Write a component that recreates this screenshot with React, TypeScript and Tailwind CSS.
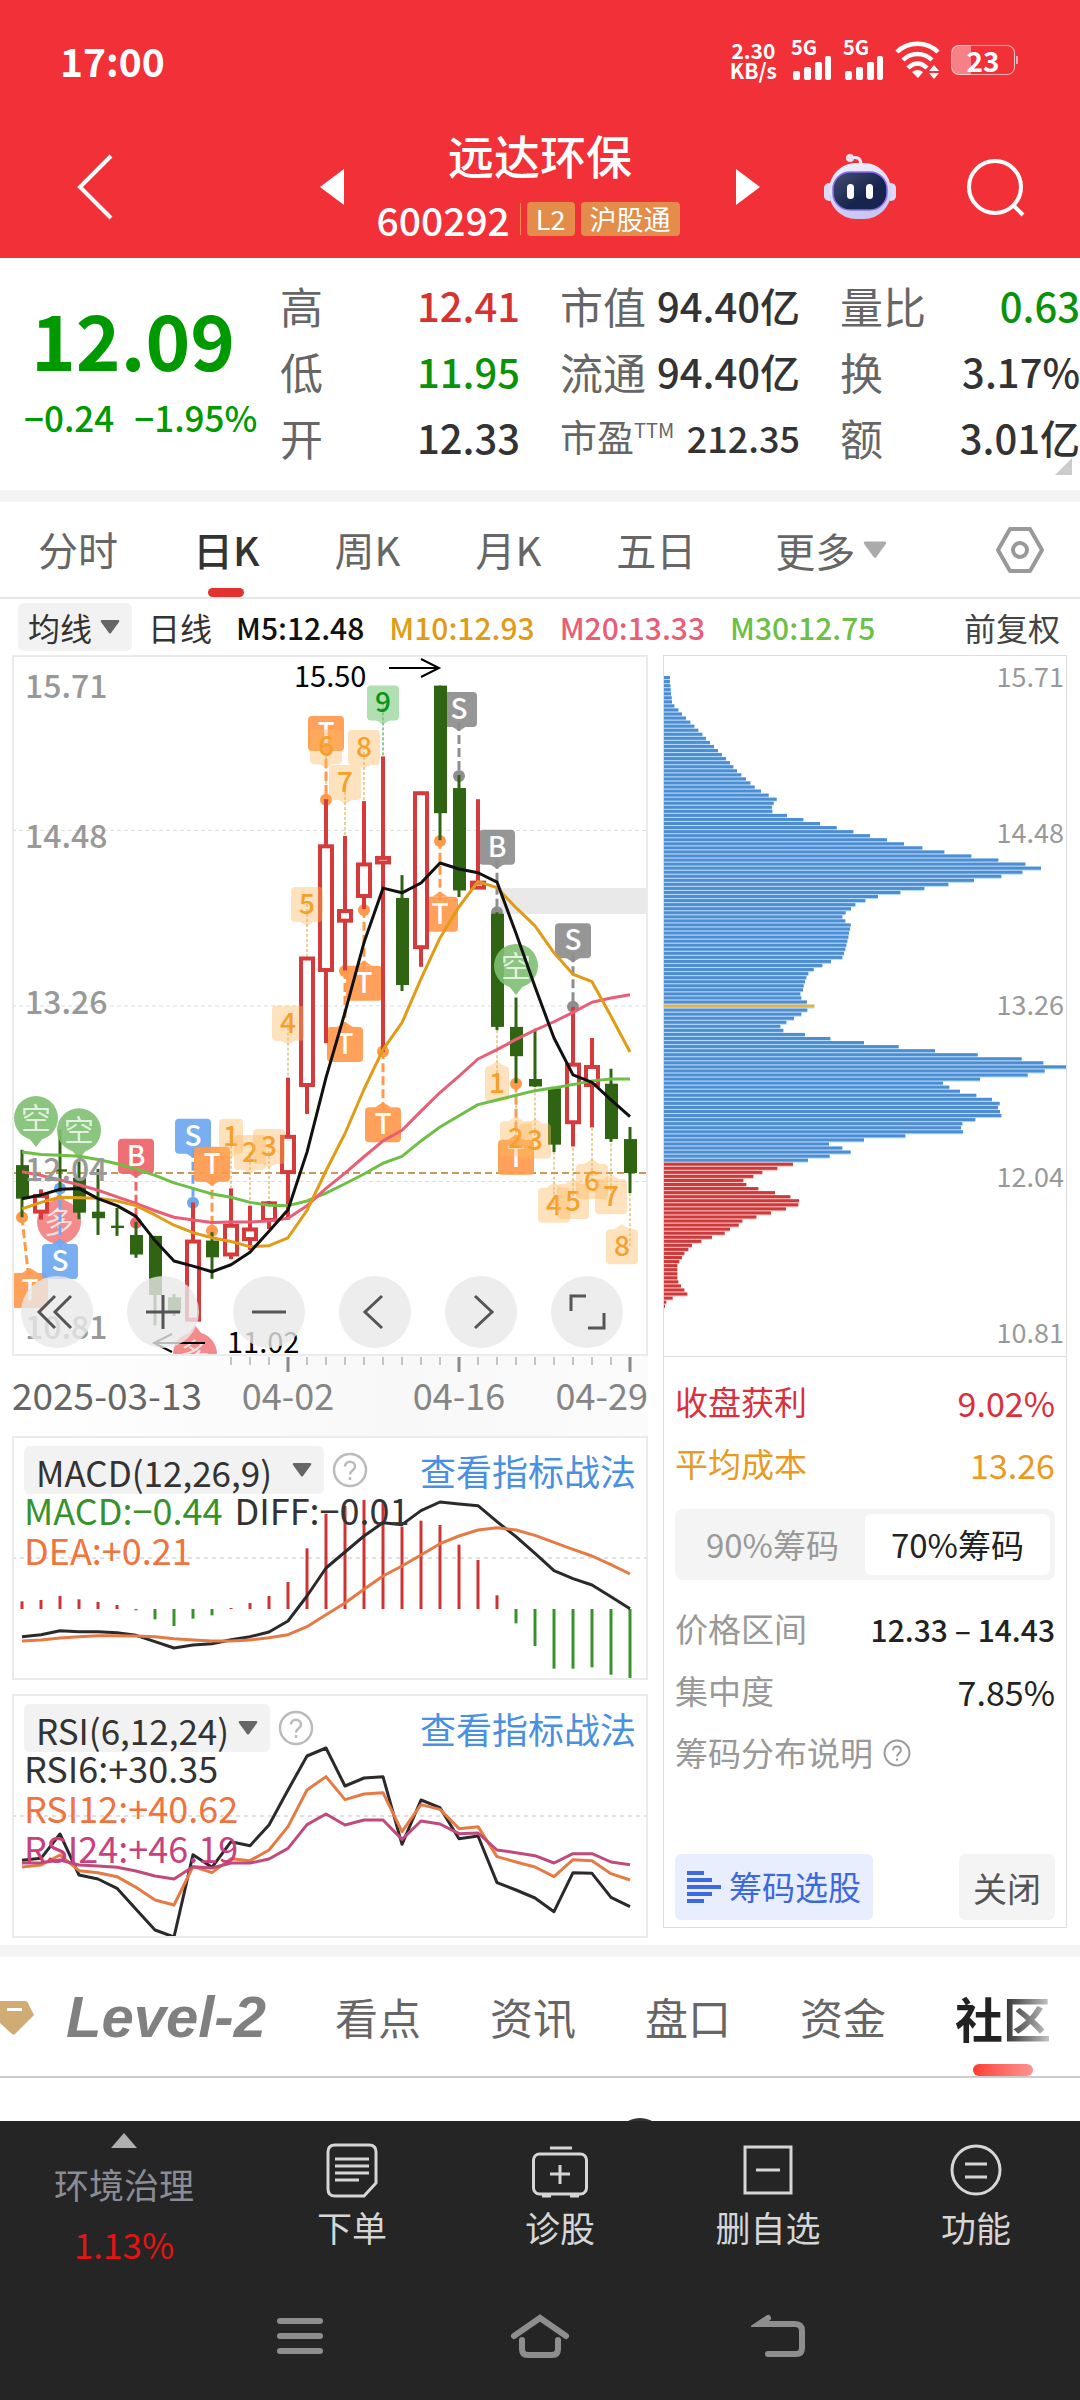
import type { ReactNode } from "react";
import clsx from "clsx";

/* ---------- chart data ---------- */

type Candle = { up?: boolean; high: number; top: number; bottom: number; low: number };

// Levels are in plot units, larger means a lower price.
const candle = (up: number, high: number, top: number, bottom: number, low: number): Candle => ({
  up: up === 1,
  high,
  top,
  bottom,
  low,
});

const CANDLES: Candle[] = [
  candle(0, 1095, 1128, 1200, 1240),
  candle(1, 1180, 1192, 1230, 1245),
  candle(0, 1052, 1137, 1142, 1185),
  candle(0, 1120, 1155, 1230, 1244),
  candle(0, 1136, 1228, 1242, 1278),
  candle(0, 1220, 1258, 1263, 1280),
  candle(0, 1250, 1278, 1320, 1327),
  candle(0, 1280, 1280, 1407, 1472),
  candle(0, 1405, 1412, 1445, 1452),
  candle(1, 1208, 1290, 1462, 1465),
  candle(0, 1272, 1290, 1326, 1372),
  candle(1, 1178, 1256, 1322, 1330),
  candle(1, 1215, 1264, 1289, 1310),
  candle(1, 1205, 1208, 1248, 1265),
  candle(1, 940, 1065, 1145, 1245),
  candle(1, 682, 682, 958, 1018),
  candle(1, 342, 441, 711, 866),
  candle(1, 421, 580, 605, 710),
  candle(1, 346, 480, 552, 578),
  candle(1, 250, 466, 480, 885),
  candle(0, 505, 554, 741, 754),
  candle(1, 326, 327, 662, 702),
  candle(0, 98, 98, 372, 430),
  candle(0, 290, 318, 538, 552),
  candle(1, 342, 519, 534, 534),
  candle(0, 585, 588, 831, 838),
  candle(0, 768, 831, 894, 952),
  candle(0, 835, 943, 959, 960),
  candle(0, 963, 963, 1084, 1100),
  candle(1, 788, 910, 1038, 1088),
  candle(1, 855, 915, 958, 1047),
  candle(0, 921, 953, 1072, 1078),
  candle(0, 1046, 1072, 1145, 1188),
];

const M5 = [
  1200, 1192, 1180, 1178, 1200, 1215, 1238, 1290, 1334, 1345, 1357, 1342, 1315, 1270, 1224, 1100, 940, 800, 650, 533,
  543, 522, 479, 492, 500, 520, 630, 745, 855, 934, 950, 988, 1024,
];
const M10 = [
  1222, 1208, 1197, 1198, 1199, 1205, 1215, 1235, 1257, 1273, 1284, 1292, 1303, 1301, 1284, 1225, 1140, 1060, 965, 880,
  822, 728, 640, 573, 519, 532, 575, 614, 672, 718, 734, 808, 885,
];
const M20 = [
  1142, 1150, 1160, 1170, 1182, 1196, 1210, 1226, 1240, 1246, 1251, 1250, 1250, 1248, 1242, 1215, 1178, 1145, 1110,
  1076, 1053, 1012, 972, 937, 900, 880, 858, 838, 820, 800, 778, 769, 762,
];
const M30 = [
  1100, 1105, 1107, 1109, 1116, 1125, 1136, 1150, 1166, 1178, 1190, 1197, 1208, 1214, 1215, 1205, 1188, 1168, 1147,
  1124, 1109, 1076, 1046, 1022, 998, 988, 978, 968, 962, 955, 947, 943, 943,
];

const MACD_BARS = [
  784, 780, 768, 778, 786, 795, 811, 838, 858, 836, 826, 804, 789, 768, 726, 625, 521, 498, 480, 487, 560, 542, 555,
  614, 660, 766, 850, 918, 986, 986, 982, 1004, 1020,
];
const DIFF = [
  890, 884, 872, 875, 875, 878, 886, 905, 924, 915, 911, 899, 890, 876, 843, 768, 684, 636, 588, 548, 554, 512, 486,
  492, 497, 545, 590, 640, 692, 716, 735, 770, 806,
];
const DEA = [
  903, 900, 894, 890, 887, 887, 888, 890, 896, 900, 903, 903, 900, 893, 884, 860, 824, 789, 748, 708, 678, 645, 611,
  588, 570, 563, 570, 586, 607, 628, 648, 674, 702,
];

const RSI6 = [
  541, 535, 462, 585, 597, 625, 688, 750, 771, 524, 562, 485, 497, 435, 330, 228, 204, 318, 294, 290, 493, 360, 383,
  476, 468, 608, 630, 654, 695, 578, 580, 652, 680,
];
const RSI12 = [
  561, 555, 525, 572, 578, 590, 622, 660, 675, 560, 578, 536, 542, 510, 440, 330, 290, 359, 342, 338, 455, 374, 388,
  446, 440, 530, 546, 561, 590, 539, 542, 581, 600,
];
const RSI24 = [
  549, 548, 540, 555, 558, 562, 573, 588, 597, 560, 564, 549, 549, 537, 505, 434, 402, 435, 420, 420, 478, 423, 432,
  461, 459, 510, 518, 527, 549, 521, 521, 546, 554,
];

const CHIPS = [
  89, 89, 90, 91, 92, 94, 95, 102, 114, 125, 137, 150, 162, 174, 186, 197, 209, 221, 233, 245, 257, 269, 279, 290, 303,
  317, 330, 343, 362, 385, 409, 400, 395, 396, 440, 489, 539, 589, 639, 689, 740, 791, 846, 912, 993, 1074, 1155, 1202,
  1146, 1083, 1001, 924, 852, 780, 713, 675, 645, 632, 616, 606, 615, 631, 629, 626, 624, 621, 618, 615, 611, 606, 572,
  546, 520, 504, 498, 494, 490, 488, 480, 483, 500, 522, 501, 483, 461, 438, 420, 429, 494, 570, 671, 775, 884, 1012,
  1144, 1209, 1281, 1213, 1162, 1019, 908, 927, 959, 1008, 1055, 1078, 1073, 1079, 1083, 1005, 966, 962, 968, 795, 671,
  566, 606, 631, 568, 503, 458, 411, 366, 339, 309, 318, 354, 404, 450, 476, 474, 437, 392, 348, 306, 295, 269, 253,
  215, 183, 155, 144, 132, 125, 117, 111, 111, 111, 111, 114, 122, 132, 141, 97, 78, 74,
];
const AVERAGE_COST_ROW = 81;
const FIRST_PROFIT_ROW = 120;

const xAt = (i: number) => 10 + 19 * i;
const yMain = (v: number) => v / 2.148 - 15;
const yMacd = (v: number) => v / 3 - 96;
const yRsi = (v: number) => v / 3 - 14;
const toPoints = (values: number[], y: (v: number) => number) => values.map((v, i) => `${xAt(i)},${y(v)}`).join(" ");

/* ---------- chart marks ---------- */

type TagProps = {
  x: number;
  y: number;
  label: string;
  fill: string;
  color: string;
  width?: number;
  opacity?: number;
  pointUp?: boolean;
};

const Tag = ({ x, y, label, fill, color, width = 36, opacity = 1, pointUp }: TagProps) => {
  const cy = yMain(y);
  const edge = pointUp ? cy - 17 : cy + 17;
  const tip = pointUp ? edge - 5 : edge + 5;
  return (
    <g>
      <g fill={fill} opacity={opacity}>
        <rect x={x - width / 2} y={cy - 17} width={width} height={35} rx={4} />
        <polygon points={`${x - 8},${edge} ${x},${tip} ${x + 8},${edge}`} />
      </g>
      <text x={x} y={cy + 10} textAnchor="middle" fontSize={28} fontWeight={500} fill={color}>
        {label}
      </text>
    </g>
  );
};

const Balloon = ({ x, y, label, fill, pointUp }: { x: number; y: number; label: string; fill: string; pointUp?: boolean }) => {
  const cy = yMain(y);
  const dir = pointUp ? -1 : 1;
  return (
    <g>
      <g fill={fill} opacity={0.9}>
        <circle cx={x} cy={cy} r={22} />
        <polygon points={`${x - 8},${cy + dir * 19} ${x},${cy + dir * 29} ${x + 8},${cy + dir * 19}`} />
      </g>
      <text x={x} y={cy + 11} textAnchor="middle" fontSize={30} fill="#fff" opacity={0.75}>
        {label}
      </text>
    </g>
  );
};

const ORANGE = "#ff9a4d";
const BLUE = "#6ea8f0";
const RED = "#ee6469";
const GREY = "#8e8e8e";

// [x, y, dot x, dot y, letter, colour]
const SIGNALS: [number, number, number, number, string, string][] = [
  [18, 1396, 10, 1240, "T", ORANGE],
  [48, 1334, 48, 1178, "S", BLUE],
  [124, 1108, 124, 1252, "B", RED],
  [181, 1065, 181, 1209, "S", BLUE],
  [200, 1125, 200, 1269, "T", ORANGE],
  [314, 200, 314, 343, "T", ORANGE],
  [333, 868, 333, 711, "T", ORANGE],
  [352, 736, 352, 580, "T", ORANGE],
  [371, 1040, 371, 884, "T", ORANGE],
  [428, 588, 428, 432, "T", ORANGE],
  [447, 148, 447, 292, "S", GREY],
  [485, 444, 485, 585, "B", GREY],
  [561, 645, 561, 788, "S", GREY],
  [504, 1110, 504, 953, "T", ORANGE],
];

// [x, y, candle edge, digit]
const COUNTS: [number, number, number, string][] = [
  [219, 1065, 1178, "1"],
  [238, 1100, 1215, "2"],
  [257, 1087, 1205, "3"],
  [276, 822, 940, "4"],
  [295, 567, 682, "5"],
  [314, 228, 342, "6"],
  [333, 305, 421, "7"],
  [352, 230, 346, "8"],
  [371, 134, 250, "9"],
  [485, 952, 838, "1"],
  [504, 1070, 952, "2"],
  [523, 1075, 960, "3"],
  [542, 1213, 1100, "4"],
  [561, 1205, 1088, "5"],
  [580, 1162, 1047, "6"],
  [599, 1195, 1078, "7"],
  [610, 1302, 1188, "8"],
];

const PriceChart = () => (
  <svg viewBox="0 0 636 701" className="block h-auto w-full" role="img" aria-label="日K线">
    {[409, 786, 1163].map((y) => (
      <line key={y} x1={0} x2={636} y1={yMain(y)} y2={yMain(y)} stroke="#dcdcdc" strokeWidth={1} strokeDasharray="4 3" />
    ))}
    <rect x={488} y={233} width={148} height={26} fill="#e9e9e9" />
    <line x1={0} x2={636} y1={518} y2={518} stroke="#c69a5c" strokeWidth={2} strokeDasharray="7 4" />

    {COUNTS.map(([x, y, edge, digit]) => {
      const lineX = digit === "8" && y > 1000 ? xAt(32) : x;
      return (
        <line
          key={`${x}-${y}`}
          x1={lineX}
          x2={lineX}
          y1={yMain(y)}
          y2={yMain(edge)}
          stroke={digit === "9" ? "#14991e" : "#d3a13a"}
          strokeWidth={1}
          strokeDasharray="3 2"
        />
      );
    })}

    <Balloon x={47} y={1250} label="多" fill="#f27e80" pointUp />
    {SIGNALS.map(([x, y, dotX, dotY, letter, fill]) => (
      <g key={`${letter}-${x}-${y}`}>
        <line x1={x} y1={yMain(y)} x2={dotX} y2={yMain(dotY)} stroke={fill} strokeWidth={3} strokeDasharray="9 4" />
        <circle cx={dotX} cy={yMain(dotY)} r={6} fill={fill} />
        <Tag x={x} y={y} label={letter} fill={fill} color="#fff" opacity={0.92} pointUp={y > dotY} />
      </g>
    ))}

    {CANDLES.map(({ up, high, top, bottom, low }, i) => {
      const x = xAt(i);
      const color = up ? "#d63a3a" : "#2f6412";
      const bodyHeight = Math.max(yMain(bottom) - yMain(top), 2);
      return (
        <g key={i} stroke={color} strokeWidth={up ? 4 : 3}>
          <line x1={x} x2={x} y1={yMain(high)} y2={yMain(up ? top : low)} />
          {up && <line x1={x} x2={x} y1={yMain(bottom)} y2={yMain(low)} />}
          {up ? (
            <rect x={x - 6} y={yMain(top) + 1} width={12} height={Math.max(bodyHeight - 2, 2)} fill="#fff" />
          ) : (
            <rect x={x - 6} y={yMain(top)} width={13} height={bodyHeight} fill={color} stroke="none" />
          )}
        </g>
      );
    })}

    {COUNTS.map(([x, y, edge, digit]) => (
      <Tag
        key={`${x}-${y}`}
        x={x}
        y={y}
        label={digit}
        width={digit === "1" ? 24 : 32}
        fill={digit === "9" ? "#7cca7f" : "#fdb95d"}
        color={digit === "9" ? "#0b9417" : "#f6a02c"}
        opacity={digit === "9" ? 0.6 : 0.4}
        pointUp={y > edge}
      />
    ))}

    <Balloon x={24} y={1027} label="空" fill="#7fbf72" />
    <Balloon x={67} y={1053} label="空" fill="#7fbf72" />
    <Balloon x={504} y={700} label="空" fill="#7fbf72" />
    <Balloon x={183} y={1534} label="多" fill="#f27e80" pointUp />

    <g fill="none" strokeWidth={3} strokeLinejoin="round">
      <polyline points={toPoints(M30, yMain)} stroke="#6dbf45" />
      <polyline points={toPoints(M20, yMain)} stroke="#ea5d76" />
      <polyline points={toPoints(M10, yMain)} stroke="#e09c16" />
      <polyline points={toPoints(M5, yMain)} stroke="#111" />
    </g>

    <g fontSize={32} fontWeight={500} fill="#999">
      <text x={13} y={43}>15.71</text>
      <text x={13} y={193}>14.48</text>
      <text x={13} y={359}>13.26</text>
      <text x={13} y={526}>12.04</text>
      <text x={13} y={684}>10.81</text>
    </g>
    <g fontSize={29} fill="#000">
      <text x={282} y={32}>15.50</text>
      <text x={215} y={698}>11.02</text>
    </g>
    <g fill="none" stroke="#000" strokeWidth={2}>
      <path d="M377 13H427M409 4L427 13L409 22" />
      <path d="M193 688H142M160 679L142 688L160 697" />
    </g>
  </svg>
);

const DateAxis = () => (
  <svg viewBox="0 0 636 80" className="block h-auto w-full">
    <defs>
      <linearGradient id="axis-shade">
        <stop offset="0" stopColor="#fff" />
        <stop offset="0.6" stopColor="#f8f8f8" />
        <stop offset="1" stopColor="#fbfbfb" />
      </linearGradient>
    </defs>
    <rect width={636} height={80} fill="url(#axis-shade)" />
    {CANDLES.map((_, i) =>
      i < 11 ? null : (
        <line
          key={i}
          x1={xAt(i)}
          x2={xAt(i)}
          y1={1}
          y2={(i - 14) % 9 === 0 ? 16 : 9}
          stroke={(i - 14) % 9 === 0 ? "#8a8a8a" : "#c4c4c4"}
          strokeWidth={(i - 14) % 9 === 0 ? 3 : 2}
        />
      ),
    )}
    <g fontSize={36} fill="#858585">
      <text x={0} y={54} fontSize={37} fill="#666">2025-03-13</text>
      <text x={276} y={54} textAnchor="middle">04-02</text>
      <text x={447} y={54} textAnchor="middle">04-16</text>
      <text x={636} y={54} textAnchor="end">04-29</text>
    </g>
  </svg>
);

const MacdPlot = () => (
  <svg viewBox="0 0 636 244" className="block h-auto w-full [grid-area:1/1]">
    <line x1={0} x2={636} y1={122} y2={122} stroke="#e0e0e0" strokeWidth={2} strokeDasharray="4 4" />
    {MACD_BARS.map((v, i) => (
      <line
        key={i}
        x1={xAt(i)}
        x2={xAt(i)}
        y1={173}
        y2={yMacd(v)}
        stroke={v < 808 ? "#cf3434" : "#38922b"}
        strokeWidth={3}
      />
    ))}
    <g fill="none" strokeWidth={3} strokeLinejoin="round">
      <polyline points={toPoints(DIFF, yMacd)} stroke="#2a2a2a" />
      <polyline points={toPoints(DEA, yMacd)} stroke="#e67a45" />
    </g>
  </svg>
);

const RsiPlot = () => (
  <svg viewBox="0 0 636 244" className="block h-auto w-full [grid-area:1/1]">
    <line x1={0} x2={636} y1={122} y2={122} stroke="#e0e0e0" strokeWidth={2} strokeDasharray="4 4" />
    <g fill="none" strokeWidth={3} strokeLinejoin="round">
      <polyline points={toPoints(RSI6, yRsi)} stroke="#2a2a2a" />
      <polyline points={toPoints(RSI12, yRsi)} stroke="#e67a45" />
      <polyline points={toPoints(RSI24, yRsi)} stroke="#c04a7c" />
    </g>
  </svg>
);

const ChipChart = () => (
  <svg viewBox="1 0 402 700" className="block h-auto w-full" role="img" aria-label="筹码分布">
    {CHIPS.map((v, i) => {
      const fill = i === AVERAGE_COST_ROW ? "#e3b34a" : i >= FIRST_PROFIT_ROW ? "#cd3a3c" : "#4f8dd3";
      const gap = i >= FIRST_PROFIT_ROW ? "#ffc4c4" : "#b4defb";
      const width = (v - 71) / 3;
      const y = 20 + i * 4.056;
      return (
        <g key={i}>
          <rect x={1} y={y} width={width} height={4.056} fill={gap} />
          <rect x={1} y={y} width={width} height={3} fill={fill} />
        </g>
      );
    })}
    <g fontSize={27} fill="#999" textAnchor="end">
      <text x={401} y={31}>15.71</text>
      <text x={401} y={187}>14.48</text>
      <text x={401} y={359}>13.26</text>
      <text x={401} y={531}>12.04</text>
      <text x={401} y={687}>10.81</text>
    </g>
  </svg>
);

/* ---------- small parts ---------- */

const Caret = ({ className }: { className?: string }) => (
  <svg viewBox="0 0 20 14" className={clsx("pointer-events-none h-[14px] w-5", className)} fill="currentColor">
    <path d="M2 0H18Q20 0 19 2L11 13Q10 14 9 13L1 2Q0 0 2 0Z" />
  </svg>
);

const Help = ({ className }: { className?: string }) => (
  <svg viewBox="0 0 36 36" className={className} fill="none" stroke="currentColor" strokeWidth={2.5}>
    <circle cx={18} cy={18} r={16} />
    <path d="M13 14.5C13 8 23 8 23 14.5C23 18.5 18 18.5 18 22.5M18 25V28" />
  </svg>
);

const Dropdown = ({ label, value, className }: { label: string; value: string; className?: string }) => (
  <div className={clsx("relative flex h-12 items-center rounded-md bg-[#f2f2f2]", className)}>
    <select aria-label={label} className="h-12 w-full appearance-none bg-transparent text-[#333] outline-none">
      <option>{value}</option>
    </select>
    <Caret className="absolute right-3 text-[#666]" />
  </div>
);

type IndicatorPanelProps = { name: string; selectClass: string; plot: ReactNode; children: ReactNode };

const IndicatorPanel = ({ name, selectClass, plot, children }: IndicatorPanelProps) => (
  <section className="grid outline-2 -outline-offset-2 outline-[#ebebeb]">
    {plot}
    <div className="px-3 pt-[10px] [grid-area:1/1]">
      <div className="flex items-center text-[35px]">
        <Dropdown label="指标" value={name} className={selectClass} />
        <button aria-label="指标说明" className="ml-2 text-[#bbb]">
          <Help className="size-9" />
        </button>
        <a href="#tactics" className="ml-auto text-4xl text-[#4a90e2]">
          查看指标战法
        </a>
      </div>
      <div className="-mt-[5px] text-4xl leading-10">{children}</div>
    </div>
  </section>
);

const Signal = () => (
  <div className="flex flex-col">
    <span className="text-xl leading-4 font-bold">5G</span>
    <svg viewBox="0 0 40 26" className="h-[26px] w-10" fill="#fff">
      <rect x={2} y={16} width={7} height={9} rx={2} />
      <rect x={13} y={12} width={7} height={13} rx={2} />
      <rect x={24} y={7} width={7} height={18} rx={2} />
      <rect x={34} y={1} width={6} height={24} rx={2} />
    </svg>
  </div>
);

const StatusBar = () => (
  <div className="flex h-[120px] items-center pr-[62px] pl-[60px]">
    <time className="text-[39px] leading-none font-bold">17:00</time>
    <div className="ml-auto flex flex-col items-center text-[21px] leading-5 font-bold">
      <span>2.30</span>
      <span>KB/s</span>
    </div>
    <div className="ml-[14px] flex gap-3">
      <Signal />
      <Signal />
    </div>
    <svg viewBox="0 0 46 38" className="ml-3 h-[38px] w-[46px]" fill="none" stroke="#fff" strokeWidth={4.5}>
      <path d="M2 11C13 0 32 0 43 11" />
      <path d="M8 19C16 11 29 11 37 19" />
      <path d="M13 27C19 21 26 21 32 27" />
      <path d="M17 31Q22.500 27 28 31L23 37Z" fill="#fff" stroke="none" />
      <path d="M34 30L39 24L44 30ZM34 32L39 38L44 32Z" fill="#fff" stroke="none" />
    </svg>
    <div className="ml-[10px] flex h-[30px] w-16 items-center justify-center rounded-lg border border-white/60 bg-linear-to-r from-white/40 from-30% to-transparent to-30% text-[28px] leading-none font-bold">
      23
    </div>
    <div className="ml-px h-2 w-[2px] bg-white/60" />
  </div>
);

const Robot = () => (
  <svg viewBox="0 0 72 68" className="h-[68px] w-[72px]">
    <defs>
      <linearGradient id="shell" x1="0" y1="0" x2="0.300" y2="1">
        <stop offset="0" stopColor="#f4f2fb" />
        <stop offset="1" stopColor="#c9c8f2" />
      </linearGradient>
      <linearGradient id="visor" x1="0" y1="0" x2="1" y2="1">
        <stop offset="0" stopColor="#44506f" />
        <stop offset="0.600" stopColor="#17244d" />
      </linearGradient>
    </defs>
    <path d="M27 5C34 3 37 6 37 12" fill="none" stroke="#eceaf8" strokeWidth={3} />
    <circle cx={26} cy={5} r={4} fill="#e4e2f4" />
    <rect x={0} y={30} width={10} height={18} rx={5} fill="#dcdaf4" />
    <rect x={62} y={30} width={10} height={18} rx={5} fill="#dcdaf4" />
    <rect x={5} y={10} width={62} height={56} rx={27} fill="url(#shell)" />
    <rect x={9} y={19} width={54} height={38} rx={17} fill="url(#visor)" stroke="#8a6cf0" strokeWidth={1.5} />
    <rect x={23} y={31} width={7} height={15} rx={3.5} fill="#fff" />
    <rect x={42} y={31} width={7} height={15} rx={3.5} fill="#fff" />
  </svg>
);

const TitleBar = () => (
  <div className="grid h-[138px] grid-cols-[1fr_440px_1fr] items-center pb-1">
    <button aria-label="返回" className="justify-self-start pl-[76px]">
      <svg viewBox="0 0 38 66" className="h-[66px] w-[38px]" fill="none" stroke="#fff" strokeWidth={4}>
        <path d="M35 2L4 33L35 64" />
      </svg>
    </button>
    <div className="flex items-center justify-between">
      <button aria-label="上一只">
        <svg viewBox="0 0 24 36" className="h-9 w-6" fill="#fff">
          <path d="M24 0V36L0 18Z" />
        </svg>
      </button>
      <div className="flex flex-col items-center">
        <h1 className="text-[46px] leading-[64px] font-medium">远达环保</h1>
        <div className="flex h-[66px] items-center gap-[6px] pr-6">
          <span className="pr-1 text-[39px] leading-none font-medium">600292</span>
          <span className="h-8 w-px bg-[#f08a50]" />
          <span className="rounded-sm bg-[#e48c49] px-[9px] text-[27px] leading-[34px]">L2</span>
          <span className="rounded-sm bg-[#e48c49] px-[9px] text-[27px] leading-[34px]">沪股通</span>
        </div>
      </div>
      <button aria-label="下一只">
        <svg viewBox="0 0 24 36" className="h-9 w-6" fill="#fff">
          <path d="M0 0V36L24 18Z" />
        </svg>
      </button>
    </div>
    <div className="flex items-center justify-between pr-[54px] pl-16">
      <button aria-label="智能助手">
        <Robot />
      </button>
      <button aria-label="搜索">
        <svg viewBox="0 0 60 60" className="size-[60px]" fill="none" stroke="#fff" strokeWidth={4}>
          <circle cx={29} cy={30} r={26} />
          <path d="M47 48L57 58" />
        </svg>
      </button>
    </div>
  </div>
);

const QUOTES: { key: string; label: ReactNode; value: string; tone: string; small?: boolean }[] = [
  { key: "high", label: "高", value: "12.41", tone: "text-[#d63232]" },
  { key: "cap", label: "市值", value: "94.40亿", tone: "text-[#333]" },
  { key: "volume", label: "量比", value: "0.63", tone: "text-[#0a930a]" },
  { key: "low", label: "低", value: "11.95", tone: "text-[#0a930a]" },
  { key: "float", label: "流通", value: "94.40亿", tone: "text-[#333]" },
  { key: "turnover", label: "换", value: "3.17%", tone: "text-[#333]" },
  { key: "open", label: "开", value: "12.33", tone: "text-[#333]" },
  {
    key: "pe",
    label: (
      <>
        市盈<sup className="top-[-14px] text-xl">TTM</sup>
      </>
    ),
    value: "212.35",
    tone: "text-[#333]",
    small: true,
  },
  { key: "amount", label: "额", value: "3.01亿", tone: "text-[#333]" },
];

const QuoteBoard = () => (
  <section className="flex h-[232px] pt-[14px]">
    <div className="w-[280px] pt-3 whitespace-nowrap text-[#009900]">
      <div className="pl-[31px] text-[76px] leading-[108px] font-bold">12.09</div>
      <div className="flex gap-5 pl-6 text-[35px] leading-[50px] font-medium">
        <span>−0.24</span>
        <span>−1.95%</span>
      </div>
    </div>
    <div className="relative flex-1">
      <dl className="grid grid-cols-3 gap-x-10">
        {QUOTES.map(({ key, label, value, tone, small }) => (
          <div key={key} className="flex h-[66px] items-center justify-between whitespace-nowrap">
            <dt className={clsx("text-[#666]", small ? "text-[37px]" : "text-[43px]")}>{label}</dt>
            <dd className={clsx("font-medium", tone, small ? "text-[36px]" : "text-[40px]")}>{value}</dd>
          </div>
        ))}
      </dl>
      <svg viewBox="0 0 17 17" className="absolute right-2 bottom-[15px] size-[17px]" fill="#ccc">
        <path d="M17 0V17H0Z" />
      </svg>
    </div>
  </section>
);

const PERIODS = ["分时", "日K", "周K", "月K", "五日"];

const PeriodTabs = () => (
  <nav className="flex h-[97px] items-stretch gap-[75px] border-b-2 border-[#e6e6e6] pr-9 pl-[38px] text-[40px] text-[#666]">
    {PERIODS.map((period) => {
      const active = period === "日K";
      return (
        <button key={period} className={clsx("flex flex-col items-center", active && "font-medium text-[#333]")}>
          <span className="min-h-0 flex-1 leading-[94px]">{period}</span>
          {active && <span className="h-[9px] w-9 shrink-0 rounded-full bg-[#e33030]" />}
        </button>
      );
    })}
    <button aria-haspopup="menu" className="flex items-center gap-2 pl-1">
      更多
      <Caret className="h-[18px] w-6 text-[#aaa]" />
    </button>
    <button aria-label="设置" className="ml-auto">
      <svg viewBox="0 0 48 48" className="size-12" fill="none" stroke="#999" strokeWidth={4} strokeLinejoin="round">
        <path d="M14 3H34L46 24L34 45H14L2 24Z" />
        <circle cx={24} cy={24} r={7} />
      </svg>
    </button>
  </nav>
);

const CHART_TOOLS: { label: string; path: string }[] = [
  { label: "最早", path: "M34 20L18 36L34 52M50 20L34 36L50 52" },
  { label: "放大", path: "M19 36H53M36 19V53" },
  { label: "缩小", path: "M19 36H53" },
  { label: "向左", path: "M43 20L26 36L43 52" },
  { label: "向右", path: "M30 20L47 36L30 52" },
  { label: "全屏", path: "M35 20H20V35M53 37V52H37" },
];

const InfoRow = ({ label, value, tone, strong }: { label: string; value: string; tone: string; strong?: boolean }) => (
  <div className={clsx("flex h-[62px] items-center justify-between whitespace-nowrap", tone)}>
    <dt>{label}</dt>
    <dd className={clsx(tone === "text-[#999]" && "text-[#222]", strong ? "text-[30px] font-medium" : "text-[34px]")}>{value}</dd>
  </div>
);

const ChipPanel = () => (
  <aside className="w-[404px] self-start border border-[#ddd] text-[33px]">
    <ChipChart />
    <div className="border-t border-[#ddd] px-[11px] pt-[14px] pb-[7px]">
      <dl>
        <InfoRow label="收盘获利" value="9.02%" tone="text-[#dc2f3e]" />
        <InfoRow label="平均成本" value="13.26" tone="text-[#e99a23]" />
      </dl>
      <div className="mt-[14px] flex h-[71px] rounded-lg bg-[#f4f4f4] p-[5px] text-[33px] text-[#999]">
        <button className="flex-1">90%筹码</button>
        <button className="flex-1 rounded-md bg-white text-[#222]">70%筹码</button>
      </div>
      <dl className="mt-[18px]">
        <InfoRow label="价格区间" value="12.33 – 14.43" tone="text-[#999]" strong />
        <InfoRow label="集中度" value="7.85%" tone="text-[#999]" />
      </dl>
      <button className="flex h-[62px] items-center gap-[10px] text-[#999]">
        筹码分布说明
        <Help className="size-7" />
      </button>
      <div className="mt-[70px] flex h-[66px] items-stretch justify-between">
        <button className="flex w-[198px] items-center justify-center gap-2 rounded-md bg-[#e8eefe] text-[33px] text-[#3d68e0]">
          <svg viewBox="0 0 34 34" className="size-[34px]" fill="none" stroke="currentColor" strokeWidth={4}>
            <path d="M0 3H17M0 10H25M0 17H34M0 24H25M0 31H17" />
          </svg>
          筹码选股
        </button>
        <button className="w-24 rounded-md bg-[#f4f4f4] text-[34px] text-[#555]">关闭</button>
      </div>
    </div>
  </aside>
);

const KLine = () => (
  <>
    <div className="flex h-14 items-center pr-5 pl-[18px] text-[30px] font-medium whitespace-nowrap">
      <Dropdown label="主图指标" value="均线" className="w-[114px] pl-[10px] text-[32px] font-normal" />
      <span className="ml-4 text-[32px] font-normal text-[#333]">日线</span>
      <div className="ml-6 flex gap-[25px]">
        <span className="text-[#111]">M5:12.48</span>
        <span className="text-[#e09c16]">M10:12.93</span>
        <span className="text-[#ea5d76]">M20:13.33</span>
        <span className="text-[#6dbf45]">M30:12.75</span>
      </div>
      <button className="ml-auto text-[32px] font-normal text-[#444]">前复权</button>
    </div>
    <div className="flex gap-[15px] pr-[13px] pb-[7px] pl-3">
      <div className="min-w-0 flex-1">
        <div className="relative overflow-hidden outline-2 -outline-offset-2 outline-[#ebebeb]">
          <PriceChart />
          <div className="absolute inset-x-0 bottom-2 flex justify-between pr-[25px] pl-[9px]">
            {CHART_TOOLS.map(({ label, path }) => (
              <button key={label} aria-label={label} className="size-[72px] rounded-full bg-[#e9e9e9]/80">
                <svg viewBox="0 0 72 72" fill="none" stroke="#555" strokeWidth={3}>
                  <path d={path} />
                </svg>
              </button>
            ))}
          </div>
        </div>
        <DateAxis />
        <IndicatorPanel name="MACD(12,26,9)" selectClass="w-[300px] pl-3" plot={<MacdPlot />}>
          <div className="text-[#38922b]">
            MACD:−0.44 <span className="pl-1 text-[#333]">DIFF:−0.01</span>
          </div>
          <div className="text-[#ef7440]">DEA:+0.21</div>
        </IndicatorPanel>
        <div className="h-[14px]" />
        <IndicatorPanel name="RSI(6,12,24)" selectClass="w-[246px] pl-3" plot={<RsiPlot />}>
          <div className="text-[#333]">RSI6:+30.35</div>
          <div className="text-[#ef7440]">RSI12:+40.62</div>
          <div className="text-[#c9417c]">RSI24:+46.19</div>
        </IndicatorPanel>
      </div>
      <ChipPanel />
    </div>
  </>
);

const FeedTabs = () => (
  <nav className="flex h-[121px] items-stretch gap-[69px] overflow-hidden border-b-2 border-[#ccc] text-[43px] whitespace-nowrap text-[#666]">
    <a href="#level2" className="flex items-center gap-8">
      <svg viewBox="0 0 34 36" className="h-9 w-[34px]">
        <path d="M0 2H25Q27 2 28 4L34 16L15 35Q14 36 12 35L0 24Z" fill="#d0ab74" />
        <rect x={7} y={9} width={15} height={3} fill="#fff" />
      </svg>
      <span className="font-['Liberation_Sans',sans-serif] text-[58px] font-bold text-[#808080] italic">Level-2</span>
    </a>
    {["看点", "资讯", "盘口", "资金"].map((tab) => (
      <a key={tab} href={`#${tab}`} className="flex items-center">
        {tab}
      </a>
    ))}
    <a href="#社区" className="flex flex-col items-center">
      <span className="min-h-0 flex-1 bg-linear-to-r from-[#222] from-45% to-[#ccc] bg-clip-text text-[48px] leading-[120px] font-bold text-transparent">
        社区
      </span>
      <span className="h-3 w-[60px] shrink-0 rounded-full bg-linear-to-r from-[#fb3a31] to-[#fc9290]" />
    </a>
  </nav>
);

const ACTIONS: { label: string; icon: ReactNode }[] = [
  {
    label: "下单",
    icon: (
      <>
        <path d="M9 2H43Q50 2 50 9V40L38 53H9Q2 53 2 46V9Q2 2 9 2Z" />
        <path d="M9 16H43M9 23H43M9 30H43M9 37H33" />
      </>
    ),
  },
  {
    label: "诊股",
    icon: (
      <>
        <rect x={-0.5} y={11} width={53} height={40} rx={6} />
        <path d="M16 5H38M26 22V41M16 31H36M8 53H17M36 53H45" />
      </>
    ),
  },
  {
    label: "删自选",
    icon: (
      <>
        <rect x={3} y={4} width={46} height={46} />
        <path d="M14 27H38" />
      </>
    ),
  },
  {
    label: "功能",
    icon: (
      <>
        <circle cx={26} cy={27} r={24} />
        <path d="M15 21H37M15 34H37" />
      </>
    ),
  },
];

const BottomBar = () => (
  <footer className="bg-[#252525]">
    <div className="grid h-[150px] grid-cols-[248px_repeat(4,1fr)] text-[35px] text-[#d6d6d6]">
      <button className="flex flex-col items-center pt-3">
        <svg viewBox="0 0 26 15" className="h-[15px] w-[26px]" fill="#b0b0b0">
          <path d="M13 0L26 15H0Z" />
        </svg>
        <span className="mt-[6px] leading-[60px] text-[#8c8c94]">环境治理</span>
        <span className="leading-[60px] text-[#e31414]">1.13%</span>
      </button>
      {ACTIONS.map(({ label, icon }) => (
        <button key={label} className="flex flex-col items-center pt-[22px]">
          <svg viewBox="-2 0 56 56" className="size-14" fill="none" stroke="#d6d6d6" strokeWidth={3}>
            {icon}
          </svg>
          <span className="leading-14">{label}</span>
        </button>
      ))}
    </div>
    <div className="grid h-[129px] grid-cols-[1fr_240px_240px_240px_1fr] items-center justify-items-center">
      <span />
      <button aria-label="最近任务">
        <svg viewBox="0 0 58 44" className="h-11 w-[58px]" stroke="#8e8e8e" strokeWidth={6} strokeLinecap="round">
          <path d="M9 7H49M9 22H49M9 37H49" />
        </svg>
      </button>
      <button aria-label="主屏幕">
        <svg viewBox="0 0 58 44" className="h-11 w-[58px]" fill="none" stroke="#8e8e8e" strokeWidth={6} strokeLinecap="round">
          <path d="M3 22L29 4L55 22" />
          <path d="M11 26V35Q11 41 17 41H41Q47 41 47 35V26" />
        </svg>
      </button>
      <button aria-label="后退">
        <svg viewBox="0 0 58 44" className="h-11 w-[58px]" fill="none" stroke="#8e8e8e" strokeWidth={6} strokeLinecap="round">
          <path d="M17 4L8 10H44Q51 10 51 17V34Q51 40 45 40H17" />
        </svg>
      </button>
      <span />
    </div>
  </footer>
);

export default function App() {
  return (
    <main className="bg-white font-['Noto_Sans_CJK_SC',sans-serif]">
      <header className="bg-[#f13037] text-white">
        <StatusBar />
        <TitleBar />
      </header>
      <QuoteBoard />
      <div className="h-3 bg-[#f4f4f4]" />
      <PeriodTabs />
      <KLine />
      <div className="h-3 bg-[#f4f4f4]" />
      <FeedTabs />
      <div className="h-[43px] overflow-hidden">
        <div className="mt-10 ml-[57%] size-12 rounded-full bg-[#333]" />
      </div>
      <BottomBar />
    </main>
  );
}
